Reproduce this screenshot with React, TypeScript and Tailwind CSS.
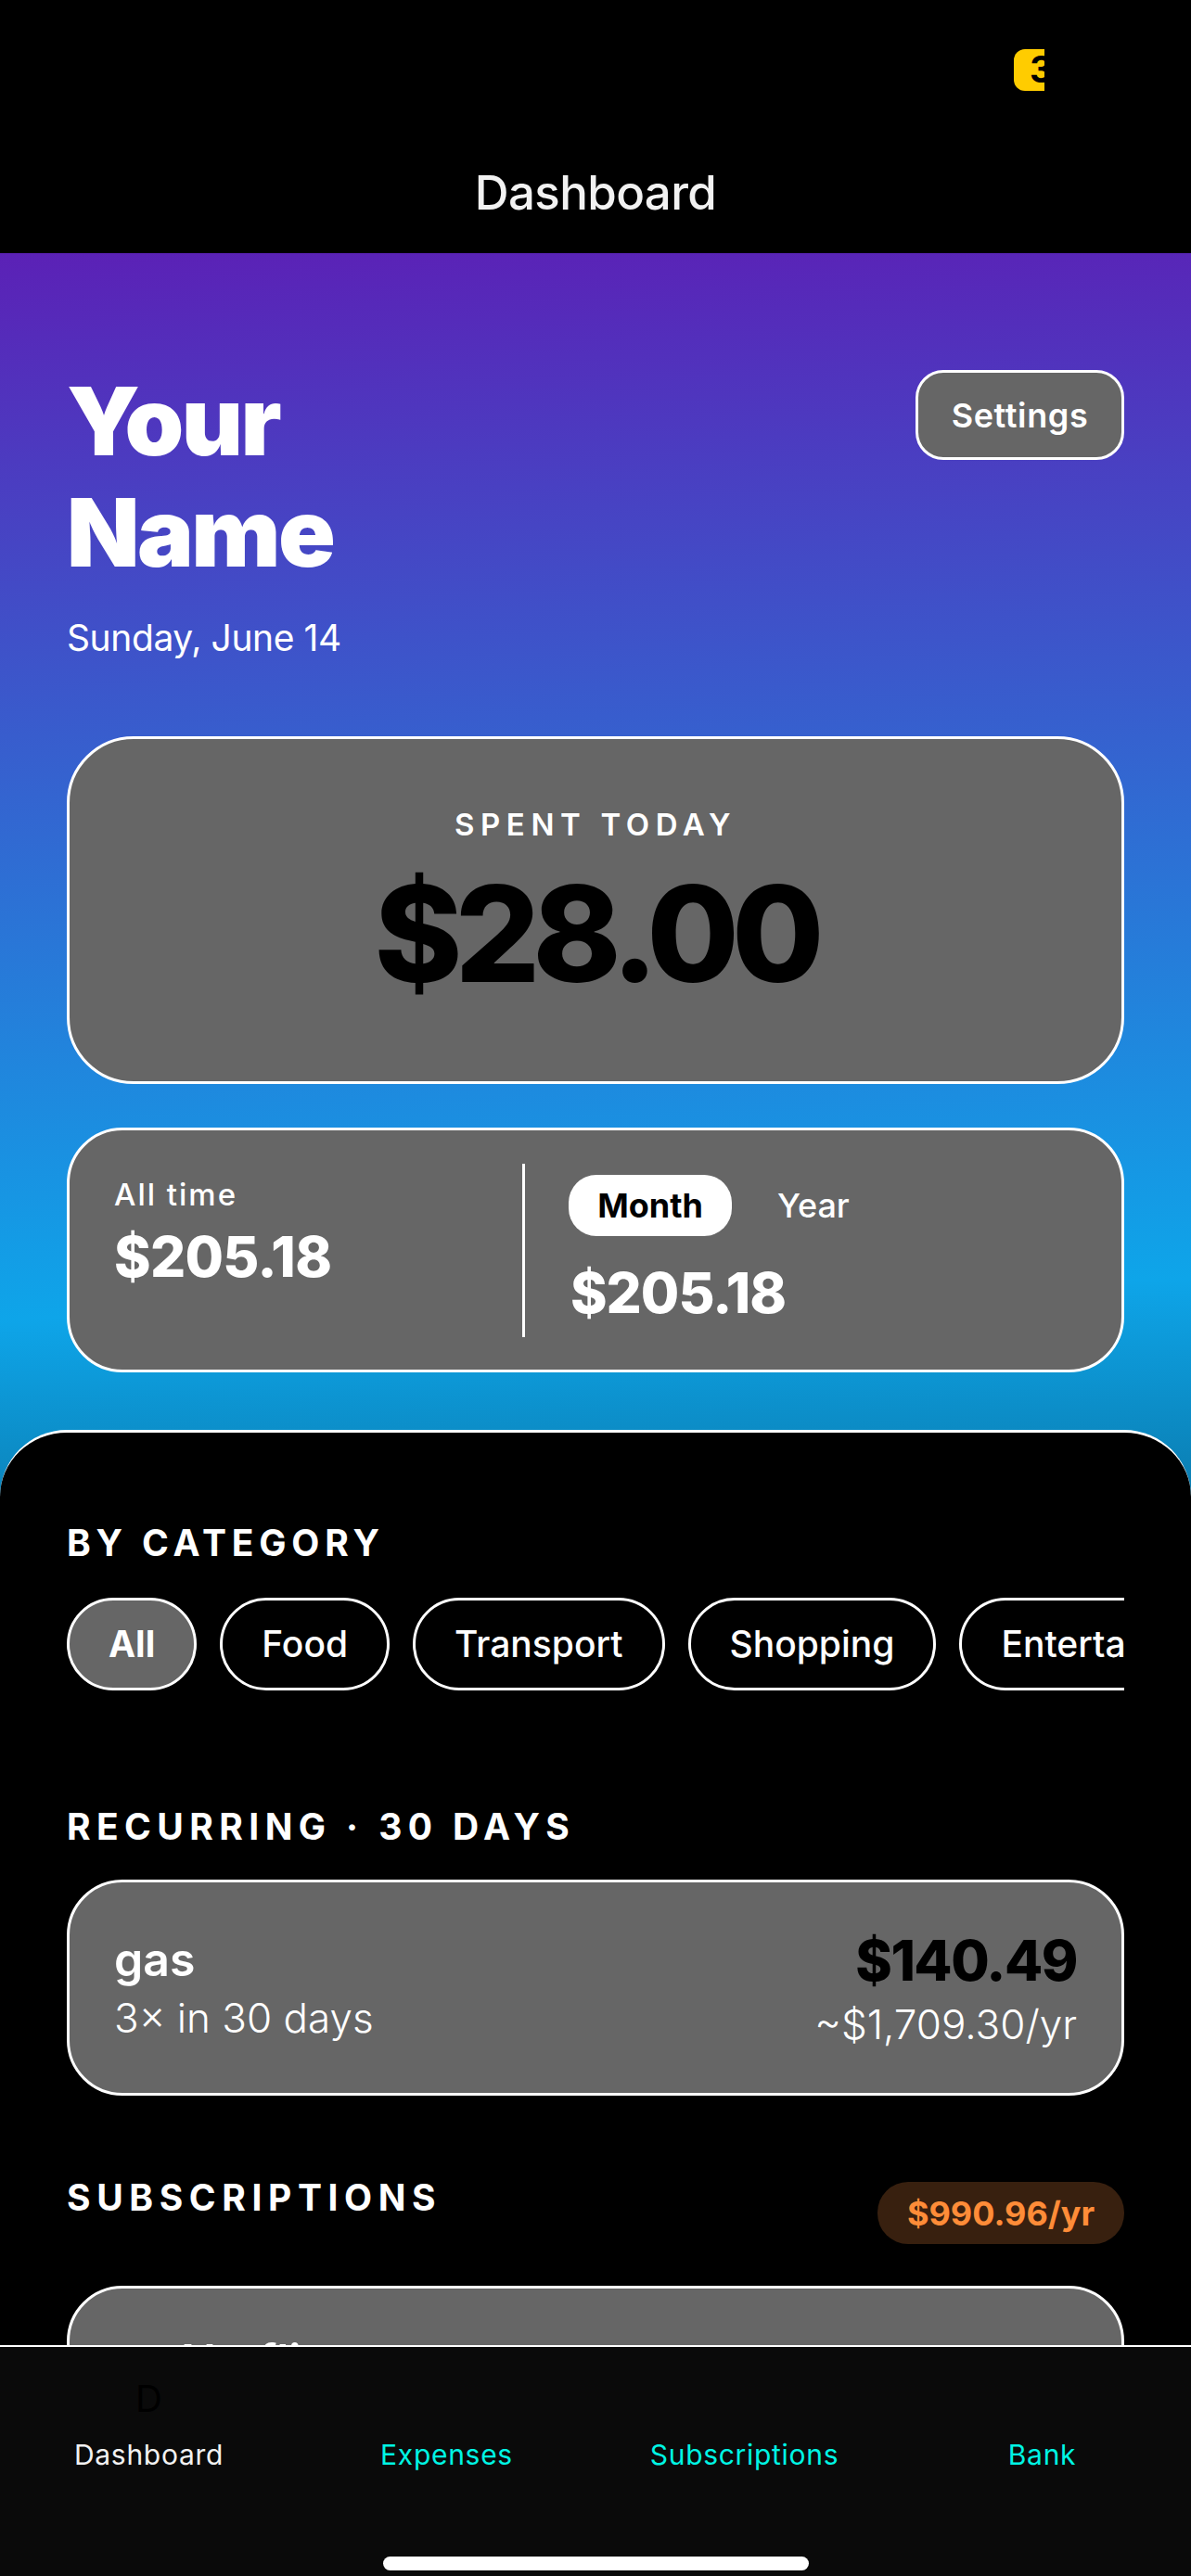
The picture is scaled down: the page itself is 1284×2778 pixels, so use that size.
import React from "react";

const font = { fontFamily: "Inter, 'Liberation Sans', sans-serif" };

function Chip({ label, active }: { label: string; active?: boolean }) {
  return (
    <div
      className={
        "flex h-[100px] shrink-0 items-center justify-center rounded-[50px] border-[3px] border-white px-[42px] text-[39px] text-white " +
        (active ? "bg-[#666666] font-bold" : "font-medium")
      }
    >
      {label}
    </div>
  );
}

function Tab({ label, active }: { label: string; active?: boolean }) {
  return (
    <div className="flex flex-1 flex-col items-center">
      <div className={"h-[60px] text-[40px] leading-[60px] " + (active ? "text-black" : "text-transparent")}>
        {label[0]}
      </div>
      <div className={"mt-[12px] text-[30px] leading-[36px] font-normal tracking-[0.7px] " + (active ? "text-[#f2f2f2]" : "text-[#00f5e4]")}>
        {label}
      </div>
    </div>
  );
}

export default function App() {
  return (
    <div className="flex h-[2778px] w-[1284px] flex-col overflow-hidden bg-black" style={font}>
      <header className="relative h-[273px] shrink-0 bg-black">
        <div className="absolute top-[53px] left-[1093px] flex h-[45px] w-[33px] items-center overflow-hidden">
          <div className="flex h-[45px] w-[60px] shrink-0 items-center rounded-[12px] bg-[#ffcc00] pl-[17px] text-[39px] font-bold text-black">
            3
          </div>
        </div>
        <div className="pt-[177px] text-center text-[51px] leading-[62px] font-medium tracking-[-0.6px] text-[#f2f2f2]">Dashboard</div>
      </header>

      <main className="relative min-h-0 flex-1 overflow-hidden bg-[linear-gradient(178deg,#5b21b6_0%,#0ea5e9_50%,#000000_92%)]">
        <div className="px-[72px] pt-[126px]">
          <div className="flex items-start justify-between">
            <div>
              <div className="-mt-[5px] w-[400px] text-[102px] leading-[120px] font-black tracking-[-2.5px] text-white">Your Name</div>
              <div className="mt-[30px] text-[39px] leading-[48px] tracking-[-0.4px] text-white">Sunday, June 14</div>
            </div>
            <div className="flex h-[97px] w-[225px] items-center justify-center rounded-[30px] border-[3px] border-white bg-[#666666] text-[36px] font-semibold tracking-[0.6px] text-white">
              Settings
            </div>
          </div>

          <div className="mt-[82px] flex h-[375px] flex-col items-center rounded-[72px] border-[3px] border-white bg-[#666666] pt-[71px]">
            <div className="text-[33px] leading-[42px] font-semibold tracking-[6.6px] text-white">SPENT TODAY</div>
            <div className="mt-[17px] text-[144px] leading-[160px] font-extrabold tracking-[-8px] text-black">$28.00</div>
          </div>

          <div className="mt-[47px] flex h-[264px] rounded-[60px] border-[3px] border-white bg-[#666666] px-[48px] pt-[36px]">
            <div className="w-[440px] shrink-0 pt-[12px]">
              <div className="text-[33px] leading-[42px] font-medium tracking-[2px] text-white">All time</div>
              <div className="mt-[10px] text-[60px] leading-[72px] font-extrabold tracking-[-0.7px] text-white">$205.18</div>
            </div>
            <div className="h-[187px] w-[3px] shrink-0 bg-white" />
            <div className="pl-[47px]">
              <div className="mt-[12px] flex items-center">
                <div className="flex h-[66px] w-[176px] items-center justify-center rounded-[30px] bg-white text-[36px] font-bold text-black">Month</div>
                <div className="ml-[49px] text-[36px] font-medium text-white">Year</div>
              </div>
              <div className="mt-[25px] pl-[2px] text-[60px] leading-[72px] font-extrabold tracking-[-1px] text-white">$205.18</div>
            </div>
          </div>
        </div>

        <section className="mt-[62px] h-[1100px] rounded-t-[72px] border-t-[3px] border-white bg-black px-[72px] pt-[97px]">
          <div className="text-[39px] leading-[44px] font-bold tracking-[5.8px] text-white">BY CATEGORY</div>
          <div className="mt-[37px] flex gap-[25px] overflow-hidden">
            <Chip label="All" active />
            <Chip label="Food" />
            <Chip label="Transport" />
            <Chip label="Shopping" />
            <Chip label="Entertainment" />
          </div>

          <div className="mt-[125px] text-[39px] leading-[44px] font-bold tracking-[6.4px] text-white">RECURRING · 30 DAYS</div>
          <div className="mt-[35px] flex h-[233px] items-center justify-between rounded-[60px] border-[3px] border-white bg-[#666666] px-[48px]">
            <div>
              <div className="text-[50px] leading-[60px] font-semibold text-white">gas</div>
              <div className="mt-[5px] text-[44px] leading-[56px] font-light text-white">3× in 30 days</div>
            </div>
            <div className="text-right">
              <div className="text-[60px] leading-[72px] font-extrabold tracking-[-1.5px] text-black">$140.49</div>
              <div className="mt-[6px] text-[44px] leading-[54px] font-light text-white">~$1,709.30/yr</div>
            </div>
          </div>

          <div className="mt-[90px] flex items-start justify-between">
            <div className="-mt-[2px] text-[39px] leading-[44px] font-bold tracking-[6.6px] text-white">SUBSCRIPTIONS</div>
            <div className="mt-[3px] flex h-[67px] w-[266px] items-center justify-center rounded-[33px] bg-[#38200f] text-[36px] font-bold text-[#ff8c38]">$990.96/yr</div>
          </div>
          <div className="mt-[45px] h-[233px] rounded-[60px] border-[3px] border-white bg-[#666666] px-[48px] pt-[48px]">
            <div className="pl-[72px] text-[50px] leading-[60px] font-semibold text-white">Netflix</div>
          </div>
        </section>
      </main>

      <nav className="h-[249px] shrink-0 border-t-[2px] border-white bg-[#0a0a0a]">
        <div className="flex pt-[26px]">
          <Tab label="Dashboard" active />
          <Tab label="Expenses" />
          <Tab label="Subscriptions" />
          <Tab label="Bank" />
        </div>
        <div className="mx-auto mt-[92px] h-[15px] w-[459px] rounded-[8px] bg-white" />
      </nav>
    </div>
  );
}
